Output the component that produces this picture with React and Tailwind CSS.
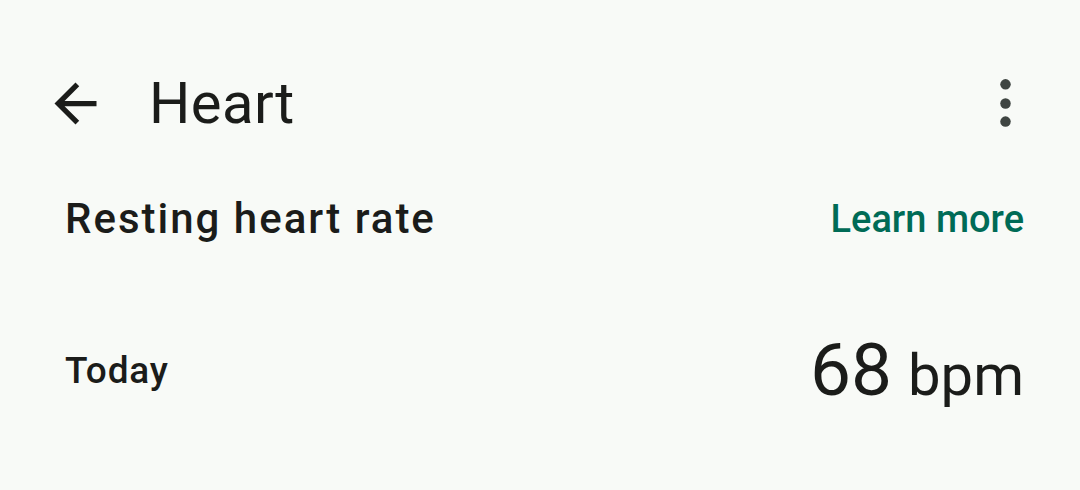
export default function App() {
  return (
    <div className="w-[1080px] h-[490px] bg-[#f8faf7] text-[#1b1c1a] overflow-hidden" style={{ fontFamily: 'Roboto, "Noto Sans", sans-serif' }}>
      <div className="h-[206px] flex items-center">
        <div className="ml-[44px] w-[63px] h-[63px] flex items-center justify-center">
          <svg viewBox="0 0 24 24" width="63" height="63" fill="#1b1c1a">
            <path d="M20 11H7.83l5.59-5.59L12 4l-8 8 8 8 1.41-1.41L7.83 13H20v-2z" />
          </svg>
        </div>
        <div className="ml-[42px] text-[58px] leading-none tracking-[0.4px]">Heart</div>
        <div className="ml-auto mr-[43px] w-[63px] h-[63px] flex items-center justify-center">
          <svg viewBox="0 0 24 24" width="63" height="63" fill="#3f4542">
            <circle cx="12" cy="4.7" r="2" />
            <circle cx="12" cy="12" r="2" />
            <circle cx="12" cy="18.9" r="2" />
          </svg>
        </div>
      </div>
      <div className="flex items-center justify-between pl-[65px] pr-[56px] h-[26px]">
        <div className="text-[42px] leading-none font-medium tracking-[2px]">Resting heart rate</div>
        <div className="text-[38px] leading-none font-medium text-[#006b56]">Learn more</div>
      </div>
      <div className="flex items-center justify-between pl-[65px] pr-[56px] h-[276px]">
        <div className="text-[37px] leading-none font-medium tracking-[0.8px]">Today</div>
        <div className="flex items-baseline leading-none">
          <span className="text-[73px]">68</span>
          <span className="text-[58px] ml-[16px]">bpm</span>
        </div>
      </div>
    </div>
  );
}
